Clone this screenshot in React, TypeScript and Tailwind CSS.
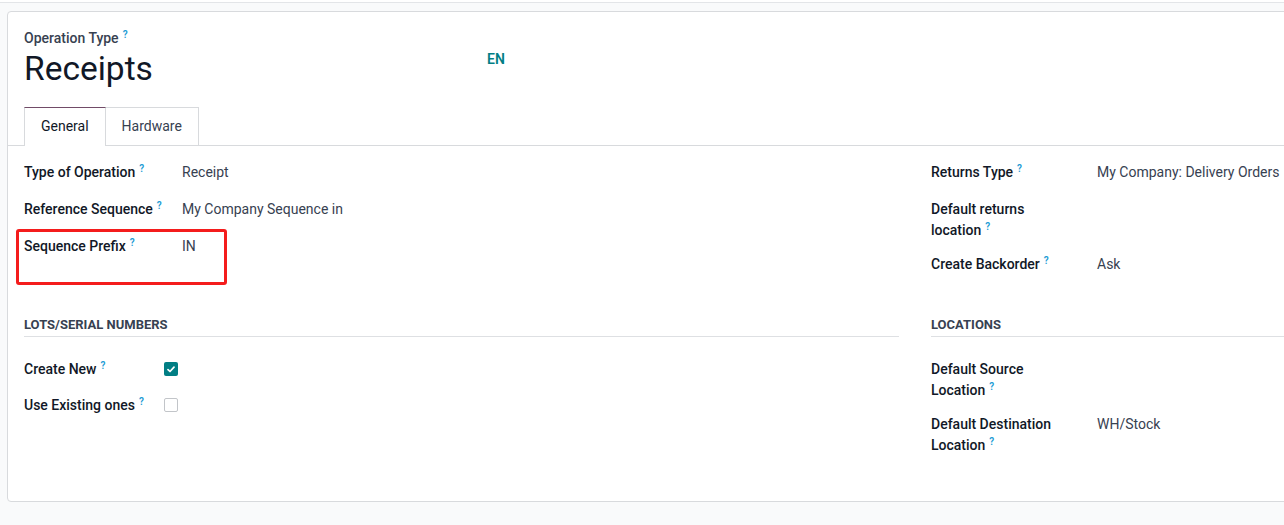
import React from 'react';

function Help() {
  return <sup className="ml-[4px] text-[10px] font-semibold text-[#1b9bd4]">?</sup>;
}

function Row({
  label,
  value,
  labelClass,
  children,
}: {
  label: string;
  value?: string;
  labelClass: string;
  children?: React.ReactNode;
}) {
  return (
    <div className="relative flex min-h-[24px] mb-[13px]">
      <div className={`shrink-0 text-[14px] leading-[21px] font-medium text-[#111827] ${labelClass}`}>
        {label}
        <Help />
      </div>
      <div className="flex-1 text-[14px] leading-[21px] text-[#374151]">
        {value}
        {children}
      </div>
    </div>
  );
}

function Checkbox({ checked }: { checked: boolean }) {
  if (checked) {
    return (
      <div className="mt-[3px] w-[14px] h-[14px] rounded-[2px] bg-[#017e84] flex items-center justify-center">
        <svg width="8" height="7" viewBox="0 0 8 7" fill="none">
          <path d="M1 3.6 L3 5.5 L7 1.2" stroke="white" strokeWidth="1.7" strokeLinecap="round" strokeLinejoin="round" />
        </svg>
      </div>
    );
  }
  return <div className="mt-[3px] w-[14px] h-[14px] rounded-[2px] border border-[#c2c5c9] bg-white" />;
}

function SectionTitle({ title }: { title: string }) {
  return (
    <div className="mt-[24px] mb-[22px] pb-px border-b border-[#dee0e3] text-[13px] leading-[20px] font-bold uppercase text-[#374151]">
      {title}
    </div>
  );
}

export default function App() {
  return (
    <div className="w-[1284px] h-[525px] overflow-hidden bg-[#f9fafb] font-['Roboto',sans-serif]">
      <div className="h-[3px] bg-white border-b border-[#e3e5e8]" />

      <div className="pl-[7px] pt-[8px]">
        <div className="w-[1840px] h-[491px] bg-white border border-[#d8dadd] rounded-[4px]">
          {/* Header */}
          <div className="flex px-[16px] pt-[16px]">
            <div className="w-[463px]">
              <div className="text-[14px] leading-[21px] font-medium text-[#374151]">
                Operation Type
                <Help />
              </div>
              <h1 className="text-[33.5px] leading-[40px] text-[#111827]">Receipts</h1>
            </div>
            <div className="mt-[21px] text-[14px] leading-[21px] font-semibold text-[#017e84]">EN</div>
          </div>

          {/* Tabs */}
          <div className="mt-[18px] flex pl-[16px] border-b border-[#d8dadd]">
            <div className="-mb-px h-[39px] px-[16px] pb-[2px] flex items-center bg-white border border-b-0 border-[#d8dadd] border-t-[#714b67] text-[14px] text-[#111827]">
              General
            </div>
            <div className="h-[38px] px-[16px] pb-px flex items-center border-t border-r border-[#d8dadd] text-[14px] text-[#374151]">
              Hardware
            </div>
          </div>

          {/* Body */}
          <div className="px-[16px] pt-[16px] grid grid-cols-[875px_875px] gap-x-[32px]">
            <div>
              <Row label="Type of Operation" value="Receipt" labelClass="w-[158px] whitespace-nowrap" />
              <Row label="Reference Sequence" value="My Company Sequence in" labelClass="w-[158px] whitespace-nowrap" />
              <Row label="Sequence Prefix" value="IN" labelClass="w-[158px] whitespace-nowrap">
                <div className="absolute left-[-8px] top-[-7px] w-[211px] h-[56px] border-[3px] border-[#f41c1c] rounded-[3px]" />
              </Row>
            </div>
            <div>
              <Row label="Returns Type" value="My Company: Delivery Orders" labelClass="w-[166px] pr-[26px]" />
              <Row label="Default returns location" labelClass="w-[166px] pr-[26px]" />
              <Row label="Create Backorder" value="Ask" labelClass="w-[166px] pr-[26px]" />
            </div>

            <div>
              <SectionTitle title="Lots/Serial Numbers" />
              <Row label="Create New" labelClass="w-[140px] whitespace-nowrap">
                <Checkbox checked />
              </Row>
              <div className="-mt-px">
                <Row label="Use Existing ones" labelClass="w-[140px] whitespace-nowrap">
                  <Checkbox checked={false} />
                </Row>
              </div>
            </div>
            <div>
              <SectionTitle title="Locations" />
              <Row label="Default Source Location" labelClass="w-[166px] pr-[26px]" />
              <Row label="Default Destination Location" value="WH/Stock" labelClass="w-[166px] pr-[26px]" />
            </div>
          </div>
        </div>
      </div>
    </div>
  );
}
